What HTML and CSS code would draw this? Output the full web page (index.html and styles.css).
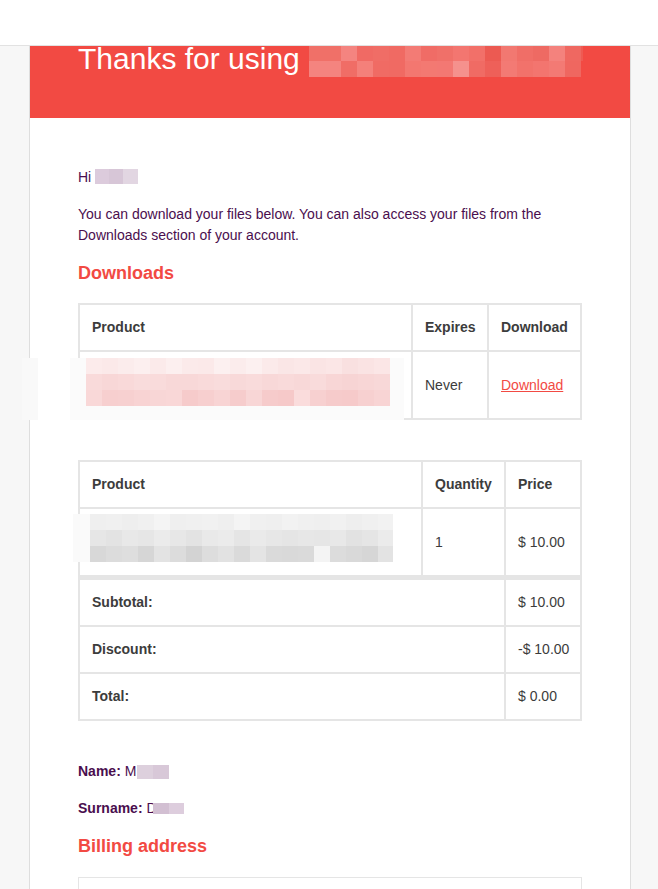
FILE: index.html
```html
<!DOCTYPE html>
<html>
<head>
<meta charset="utf-8">
<title>Order email</title>
<link rel="stylesheet" href="styles.css">
</head>
<body>
<div class="topbar"></div>
<div class="wrapper">
  <div class="email">
    <div class="header">
      <h1><span class="h1-text">Thanks for using</span><svg class="title-blur" width="294" height="48" viewBox="0 0 294 48" shape-rendering="crispEdges">
        <rect x="0" y="0" width="274" height="16" fill="#f06a63"/>
        <rect x="0" y="16" width="32" height="16" fill="#f07068"/>
        <rect x="32" y="16" width="16" height="16" fill="#f48480"/>
        <rect x="48" y="16" width="16" height="16" fill="#f06a64"/>
        <rect x="64" y="16" width="16" height="16" fill="#f06d66"/>
        <rect x="80" y="16" width="16" height="16" fill="#f06a63"/>
        <rect x="96" y="16" width="16" height="16" fill="#f37b75"/>
        <rect x="112" y="16" width="16" height="16" fill="#f06c66"/>
        <rect x="128" y="16" width="16" height="16" fill="#f07069"/>
        <rect x="144" y="16" width="16" height="16" fill="#f37670"/>
        <rect x="160" y="16" width="16" height="16" fill="#f27069"/>
        <rect x="176" y="16" width="16" height="16" fill="#ec5a52"/>
        <rect x="192" y="16" width="16" height="16" fill="#f27871"/>
        <rect x="208" y="16" width="16" height="16" fill="#f06e67"/>
        <rect x="224" y="16" width="16" height="16" fill="#ee6a63"/>
        <rect x="240" y="16" width="16" height="16" fill="#f4827d"/>
        <rect x="256" y="16" width="16" height="16" fill="#ef6861"/>
        <rect x="272" y="16" width="2" height="16" fill="#ef5a52"/>
        <rect x="0" y="32" width="32" height="16" fill="#f4847f"/>
        <rect x="32" y="32" width="16" height="16" fill="#f06d66"/>
        <rect x="48" y="32" width="16" height="16" fill="#f4807a"/>
        <rect x="64" y="32" width="16" height="16" fill="#f06b64"/>
        <rect x="80" y="32" width="16" height="16" fill="#f06a63"/>
        <rect x="96" y="32" width="16" height="16" fill="#f37770"/>
        <rect x="112" y="32" width="16" height="16" fill="#f37972"/>
        <rect x="128" y="32" width="16" height="16" fill="#f37873"/>
        <rect x="144" y="32" width="16" height="16" fill="#f5918d"/>
        <rect x="160" y="32" width="16" height="16" fill="#f06b64"/>
        <rect x="176" y="32" width="16" height="16" fill="#ee6059"/>
        <rect x="192" y="32" width="16" height="16" fill="#f37a74"/>
        <rect x="208" y="32" width="16" height="16" fill="#f2726b"/>
        <rect x="224" y="32" width="16" height="16" fill="#f3756f"/>
        <rect x="240" y="32" width="16" height="16" fill="#f37a74"/>
        <rect x="256" y="32" width="16" height="16" fill="#ef6760"/>
      </svg></h1>
    </div>

    <div class="content">
      <p>Hi <span class="blur blur-hi"></span></p>
      <p>You can download your files below. You can also access your files from the Downloads section of your account.</p>

      <h2>Downloads</h2>
      <table class="tbl tbl-downloads">
        <thead>
          <tr>
            <th class="col-product">Product</th>
            <th class="col-expires">Expires</th>
            <th class="col-download">Download</th>
          </tr>
        </thead>
        <tbody>
          <tr>
            <td>
              <div class="cell-blur">
                <svg class="blur-dl" width="382" height="62" viewBox="0 0 382 62" shape-rendering="crispEdges">
                  <rect x="0" y="0" width="16" height="62" fill="#f9f9f9"/>
                  <rect x="48" y="0" width="334" height="62" fill="#fbfbfb"/>
                  <g>
                    <rect x="64" y="0" width="16" height="16" fill="#fcebeb"/>
                    <rect x="80" y="0" width="16" height="16" fill="#fbe9e9"/>
                    <rect x="96" y="0" width="16" height="16" fill="#fbecec"/>
                    <rect x="112" y="0" width="16" height="16" fill="#fcefef"/>
                    <rect x="128" y="0" width="16" height="16" fill="#fbeaea"/>
                    <rect x="144" y="0" width="16" height="16" fill="#fcefef"/>
                    <rect x="160" y="0" width="16" height="16" fill="#fbeaea"/>
                    <rect x="176" y="0" width="16" height="16" fill="#fbe9e9"/>
                    <rect x="192" y="0" width="16" height="16" fill="#fcf0f0"/>
                    <rect x="208" y="0" width="16" height="16" fill="#fbecec"/>
                    <rect x="224" y="0" width="16" height="16" fill="#fcf0f0"/>
                    <rect x="240" y="0" width="16" height="16" fill="#fbeaea"/>
                    <rect x="256" y="0" width="16" height="16" fill="#fae6e6"/>
                    <rect x="272" y="0" width="16" height="16" fill="#fbe8e8"/>
                    <rect x="288" y="0" width="16" height="16" fill="#fae4e4"/>
                    <rect x="304" y="0" width="16" height="16" fill="#fbe6e6"/>
                    <rect x="320" y="0" width="16" height="16" fill="#f9e0e0"/>
                    <rect x="336" y="0" width="16" height="16" fill="#fae3e3"/>
                    <rect x="352" y="0" width="16" height="16" fill="#fbe6e6"/>
                  </g>
                  <g>
                    <rect x="64" y="16" width="16" height="16" fill="#f9dada"/>
                    <rect x="80" y="16" width="16" height="16" fill="#f8d7d7"/>
                    <rect x="96" y="16" width="16" height="16" fill="#f9d9d9"/>
                    <rect x="112" y="16" width="16" height="16" fill="#f9dcdc"/>
                    <rect x="128" y="16" width="16" height="16" fill="#f9dbdb"/>
                    <rect x="144" y="16" width="16" height="16" fill="#f8d8d8"/>
                    <rect x="160" y="16" width="16" height="16" fill="#f8d8d8"/>
                    <rect x="176" y="16" width="16" height="16" fill="#f9dada"/>
                    <rect x="192" y="16" width="16" height="16" fill="#f9dcdc"/>
                    <rect x="208" y="16" width="16" height="16" fill="#f8d9d9"/>
                    <rect x="224" y="16" width="16" height="16" fill="#f9dbdb"/>
                    <rect x="240" y="16" width="16" height="16" fill="#f8d8d8"/>
                    <rect x="256" y="16" width="16" height="16" fill="#f9dada"/>
                    <rect x="272" y="16" width="16" height="16" fill="#f8d8d8"/>
                    <rect x="288" y="16" width="16" height="16" fill="#f9dbdb"/>
                    <rect x="304" y="16" width="16" height="16" fill="#f8d6d6"/>
                    <rect x="320" y="16" width="16" height="16" fill="#f7d4d4"/>
                    <rect x="336" y="16" width="16" height="16" fill="#f8d6d6"/>
                    <rect x="352" y="16" width="16" height="16" fill="#f8d8d8"/>
                  </g>
                  <g>
                    <rect x="64" y="32" width="16" height="16" fill="#f9d8d8"/>
                    <rect x="80" y="32" width="16" height="16" fill="#f7cfcf"/>
                    <rect x="96" y="32" width="16" height="16" fill="#f7d0d0"/>
                    <rect x="112" y="32" width="16" height="16" fill="#f8d3d3"/>
                    <rect x="128" y="32" width="16" height="16" fill="#f8d6d6"/>
                    <rect x="144" y="32" width="16" height="16" fill="#f9d7d7"/>
                    <rect x="160" y="32" width="16" height="16" fill="#f6cbcb"/>
                    <rect x="176" y="32" width="16" height="16" fill="#f7cfcf"/>
                    <rect x="192" y="32" width="16" height="16" fill="#f8d4d4"/>
                    <rect x="208" y="32" width="16" height="16" fill="#f6cccc"/>
                    <rect x="224" y="32" width="16" height="16" fill="#f8d6d6"/>
                    <rect x="240" y="32" width="16" height="16" fill="#f6cbcb"/>
                    <rect x="256" y="32" width="16" height="16" fill="#f6c9c9"/>
                    <rect x="272" y="32" width="16" height="16" fill="#fadcdc"/>
                    <rect x="288" y="32" width="16" height="16" fill="#f7d0d0"/>
                    <rect x="304" y="32" width="16" height="16" fill="#f6cbcb"/>
                    <rect x="320" y="32" width="16" height="16" fill="#f6caca"/>
                    <rect x="336" y="32" width="16" height="16" fill="#f7d0d0"/>
                    <rect x="352" y="32" width="16" height="16" fill="#f8d4d4"/>
                  </g>
                </svg>
              </div>
            </td>
            <td>Never</td>
            <td><a class="dl-link" href="#">Download</a></td>
          </tr>
        </tbody>
      </table>

      <table class="tbl tbl-order">
        <thead>
          <tr>
            <th class="col-product">Product</th>
            <th class="col-qty">Quantity</th>
            <th class="col-price">Price</th>
          </tr>
        </thead>
        <tbody>
          <tr>
            <td>
              <div class="cell-blur">
                <svg class="blur-order" width="320" height="48" viewBox="0 0 320 48" shape-rendering="crispEdges">
                  <rect x="0" y="0" width="17" height="48" fill="#fafafa"/>
                  <g>
                    <rect x="17" y="0" width="16" height="16" fill="#efefef"/>
                    <rect x="33" y="0" width="16" height="16" fill="#f0f0f0"/>
                    <rect x="49" y="0" width="16" height="16" fill="#eeeeee"/>
                    <rect x="65" y="0" width="16" height="16" fill="#f0f0f0"/>
                    <rect x="81" y="0" width="16" height="16" fill="#f4f4f4"/>
                    <rect x="97" y="0" width="16" height="16" fill="#efefef"/>
                    <rect x="113" y="0" width="16" height="16" fill="#f0f0f0"/>
                    <rect x="129" y="0" width="16" height="16" fill="#f1f1f1"/>
                    <rect x="145" y="0" width="16" height="16" fill="#efefef"/>
                    <rect x="161" y="0" width="16" height="16" fill="#f4f4f4"/>
                    <rect x="177" y="0" width="16" height="16" fill="#f0f0f0"/>
                    <rect x="193" y="0" width="16" height="16" fill="#efefef"/>
                    <rect x="209" y="0" width="16" height="16" fill="#f2f2f2"/>
                    <rect x="225" y="0" width="16" height="16" fill="#f0f0f0"/>
                    <rect x="241" y="0" width="16" height="16" fill="#efefef"/>
                    <rect x="257" y="0" width="16" height="16" fill="#f1f1f1"/>
                    <rect x="273" y="0" width="16" height="16" fill="#eeeeee"/>
                    <rect x="289" y="0" width="16" height="16" fill="#f0f0f0"/>
                    <rect x="305" y="0" width="15" height="16" fill="#f2f2f2"/>
                  </g>
                  <g>
                    <rect x="17" y="16" width="16" height="16" fill="#e6e6e6"/>
                    <rect x="33" y="16" width="16" height="16" fill="#e3e3e3"/>
                    <rect x="49" y="16" width="16" height="16" fill="#e8e8e8"/>
                    <rect x="65" y="16" width="16" height="16" fill="#e6e6e6"/>
                    <rect x="81" y="16" width="16" height="16" fill="#ebebeb"/>
                    <rect x="97" y="16" width="16" height="16" fill="#e7e7e7"/>
                    <rect x="113" y="16" width="16" height="16" fill="#e3e3e3"/>
                    <rect x="129" y="16" width="16" height="16" fill="#e9e9e9"/>
                    <rect x="145" y="16" width="16" height="16" fill="#ebebeb"/>
                    <rect x="161" y="16" width="16" height="16" fill="#e5e5e5"/>
                    <rect x="177" y="16" width="16" height="16" fill="#eaeaea"/>
                    <rect x="193" y="16" width="16" height="16" fill="#e7e7e7"/>
                    <rect x="209" y="16" width="16" height="16" fill="#e5e5e5"/>
                    <rect x="225" y="16" width="16" height="16" fill="#e7e7e7"/>
                    <rect x="241" y="16" width="16" height="16" fill="#e6e6e6"/>
                    <rect x="257" y="16" width="16" height="16" fill="#e8e8e8"/>
                    <rect x="273" y="16" width="16" height="16" fill="#e2e2e2"/>
                    <rect x="289" y="16" width="16" height="16" fill="#e5e5e5"/>
                    <rect x="305" y="16" width="15" height="16" fill="#ebebeb"/>
                  </g>
                  <g>
                    <rect x="17" y="32" width="16" height="16" fill="#d8d8d8"/>
                    <rect x="33" y="32" width="16" height="16" fill="#dcdcdc"/>
                    <rect x="49" y="32" width="16" height="16" fill="#dedede"/>
                    <rect x="65" y="32" width="16" height="16" fill="#d6d6d6"/>
                    <rect x="81" y="32" width="16" height="16" fill="#e3e3e3"/>
                    <rect x="97" y="32" width="16" height="16" fill="#dcdcdc"/>
                    <rect x="113" y="32" width="16" height="16" fill="#d3d3d3"/>
                    <rect x="129" y="32" width="16" height="16" fill="#dddddd"/>
                    <rect x="145" y="32" width="16" height="16" fill="#e2e2e2"/>
                    <rect x="161" y="32" width="16" height="16" fill="#dadada"/>
                    <rect x="177" y="32" width="16" height="16" fill="#e4e4e4"/>
                    <rect x="193" y="32" width="16" height="16" fill="#dadada"/>
                    <rect x="209" y="32" width="16" height="16" fill="#d9d9d9"/>
                    <rect x="225" y="32" width="16" height="16" fill="#dadada"/>
                    <rect x="241" y="32" width="16" height="16" fill="#f4f4f4"/>
                    <rect x="257" y="32" width="16" height="16" fill="#dcdcdc"/>
                    <rect x="273" y="32" width="16" height="16" fill="#d9d9d9"/>
                    <rect x="289" y="32" width="16" height="16" fill="#d6d6d6"/>
                    <rect x="305" y="32" width="15" height="16" fill="#e3e3e3"/>
                  </g>
                </svg>
              </div>
            </td>
            <td>1</td>
            <td>$ 10.00</td>
          </tr>
        </tbody>
        <tfoot>
          <tr class="first-foot">
            <th colspan="2">Subtotal:</th>
            <td>$ 10.00</td>
          </tr>
          <tr>
            <th colspan="2">Discount:</th>
            <td>-$ 10.00</td>
          </tr>
          <tr>
            <th colspan="2">Total:</th>
            <td>$ 0.00</td>
          </tr>
        </tfoot>
      </table>

      <p><strong>Name:</strong> M<span class="blur blur-name"></span></p>
      <p><strong>Surname:</strong> D<span class="blur blur-surname"></span></p>

      <h2>Billing address</h2>
      <address class="address">
        <span class="addr-line">&nbsp;</span>
        <span class="addr-line">&nbsp;</span>
        <span class="addr-line">&nbsp;</span>
      </address>
    </div>
  </div>
</div>
</body>
</html>
```

FILE: styles.css
```css
html, body {
  margin: 0;
  padding: 0;
  overflow: hidden;
}

body {
  background: #f7f7f7;
  font-family: "Liberation Sans", Arial, Helvetica, sans-serif;
  font-size: 14px;
  color: #4a0e4e;
}

.topbar {
  position: fixed;
  top: 0;
  left: 0;
  right: 0;
  height: 45px;
  background: #ffffff;
  border-bottom: 1px solid #e2e2e2;
  z-index: 10;
}

.wrapper {
  padding-left: 29px;
}

.email {
  width: 600px;
  min-height: 1000px;
  background: #ffffff;
  border-left: 1px solid #dedede;
  border-right: 1px solid #dedede;
}

.header {
  background: #f24a43;
  padding: 36px 48px 37px;
}

.header h1 {
  margin: 0;
  display: flex;
  align-items: flex-start;
  gap: 9px;
  font-size: 30px;
  font-weight: normal;
  line-height: 45px;
  color: #ffffff;
  white-space: nowrap;
}

.h1-text {
  flex: none;
}

.title-blur {
  display: block;
  margin-top: -7px;
  flex: none;
}

.content {
  padding: 49px 48px 48px;
}

.content p {
  margin: 0 0 16px;
  line-height: 21px;
}

.content strong {
  font-weight: bold;
}

.content h2 {
  margin: 0 0 18px;
  font-size: 18px;
  font-weight: bold;
  line-height: 130%;
  color: #f24a43;
}

.blur {
  display: inline-block;
}

.blur-hi {
  width: 43px;
  height: 15px;
  vertical-align: -2px;
  background: linear-gradient(90deg, #dccbdc 0 33%, #d7c6d7 33% 66%, #e2d6e2 66% 100%);
}

.blur-name {
  width: 32px;
  height: 14px;
  margin-left: 1px;
  vertical-align: -3px;
  background: linear-gradient(90deg, #ddd0dd 0 50%, #d8c8d8 50% 100%);
}

.blur-surname {
  width: 31px;
  height: 11px;
  margin-left: -4px;
  vertical-align: -1px;
  background: linear-gradient(90deg, #d2bfd2 0 50%, #ddcddd 50% 100%);
}

.tbl {
  width: 504px;
  table-layout: fixed;
  border: 1px solid #e5e5e5;
  border-collapse: separate;
  border-spacing: 0;
  color: #3c3c3c;
  font-size: 14px;
  margin: 0 0 40px;
}

.tbl th,
.tbl td {
  box-sizing: border-box;
  border: 1px solid #e5e5e5;
  padding: 12px;
  text-align: left;
  vertical-align: middle;
  line-height: 21px;
  white-space: nowrap;
}

.tbl th {
  font-weight: bold;
}

.tbl-downloads .col-expires {
  width: 76px;
}

.tbl-downloads .col-download {
  width: 93px;
}

.tbl-order .col-qty {
  width: 83px;
}

.tbl-order .col-price {
  width: 76px;
}

.tbl-order .first-foot th,
.tbl-order .first-foot td {
  border-top-width: 4px;
}

.cell-blur {
  position: relative;
  height: 42px;
}

.blur-dl {
  position: absolute;
  left: -70px;
  top: -6px;
}

.blur-order {
  position: absolute;
  left: -19px;
  top: -7px;
}

.dl-link {
  color: #f24a43;
  text-decoration: underline;
}

.address {
  display: block;
  font-style: normal;
  border: 1px solid #e5e5e5;
  padding: 12px;
  color: #3c3c3c;
  line-height: 21px;
}

.addr-line {
  display: block;
}
```
